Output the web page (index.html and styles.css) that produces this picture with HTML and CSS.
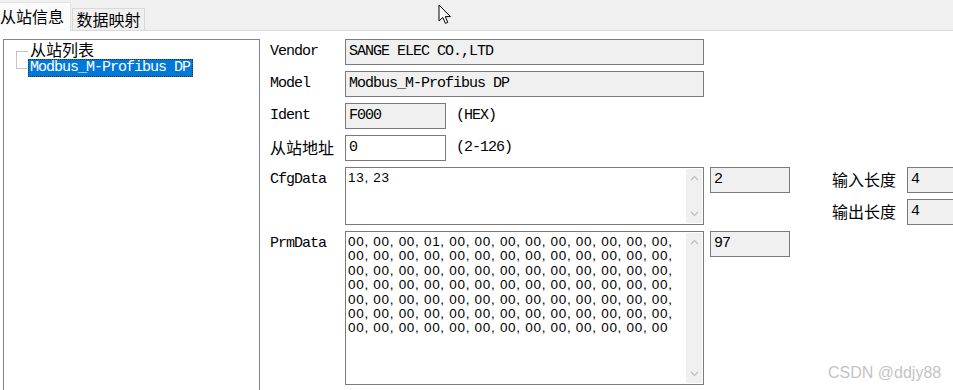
FILE: index.html
```html
<!DOCTYPE html>
<html>
<head>
<meta charset="utf-8">
<link rel="stylesheet" href="styles.css">
</head>
<body>
<div class="tabbar">
  <div class="tab active">从站信息</div>
  <div class="tab">数据映射</div>
</div>
<div class="main">
  <div class="tree">
    <svg class="conn" width="12" height="19" viewBox="0 0 12 19"><path d="M0.5 0.5H12M0.5 0.5V17.5H11" fill="none" stroke="#8a8a8a" stroke-dasharray="1 1"/></svg>
    <div class="items">
      <div class="node cjk">从站列表</div>
      <div class="node sel">Modbus_M-Profibus DP</div>
    </div>
  </div>
  <div class="form">
    <div class="row">
      <div class="label">Vendor</div>
      <div class="field wide ro">SANGE ELEC CO.,LTD</div>
    </div>
    <div class="row">
      <div class="label">Model</div>
      <div class="field wide ro">Modbus_M-Profibus DP</div>
    </div>
    <div class="row">
      <div class="label">Ident</div>
      <div class="field short ro">F000</div>
      <div class="hint">(HEX)</div>
    </div>
    <div class="row">
      <div class="label cjk">从站地址</div>
      <div class="field short">0</div>
      <div class="hint">(2-126)</div>
    </div>
    <div class="row tall">
      <div class="label">CfgData</div>
      <div class="area cfg">
        <div class="atext">13, 23</div>
        <div class="sbar">
          <svg class="chev" width="9" height="6" viewBox="0 0 9 6"><path d="M1 5L4.5 1.5L8 5" fill="none" stroke="#bcbcbc" stroke-width="1.2"/></svg>
          <svg class="chev" width="9" height="6" viewBox="0 0 9 6"><path d="M1 1L4.5 4.5L8 1" fill="none" stroke="#bcbcbc" stroke-width="1.2"/></svg>
        </div>
      </div>
      <div class="field count ro">2</div>
      <div class="lens">
        <div class="lenrow"><div class="label cjk">输入长度</div><div class="field len ro">4</div></div>
        <div class="lenrow"><div class="label cjk">输出长度</div><div class="field len ro">4</div></div>
      </div>
    </div>
    <div class="row big">
      <div class="label">PrmData</div>
      <div class="area prm">
        <div class="atext">00, 00, 00, 01, 00, 00, 00, 00, 00, 00, 00, 00, 00,<br>00, 00, 00, 00, 00, 00, 00, 00, 00, 00, 00, 00, 00,<br>00, 00, 00, 00, 00, 00, 00, 00, 00, 00, 00, 00, 00,<br>00, 00, 00, 00, 00, 00, 00, 00, 00, 00, 00, 00, 00,<br>00, 00, 00, 00, 00, 00, 00, 00, 00, 00, 00, 00, 00,<br>00, 00, 00, 00, 00, 00, 00, 00, 00, 00, 00, 00, 00,<br>00, 00, 00, 00, 00, 00, 00, 00, 00, 00, 00, 00, 00</div>
        <div class="sbar">
          <svg class="chev" width="9" height="6" viewBox="0 0 9 6"><path d="M1 5L4.5 1.5L8 5" fill="none" stroke="#bcbcbc" stroke-width="1.2"/></svg>
          <svg class="chev" width="9" height="6" viewBox="0 0 9 6"><path d="M1 1L4.5 4.5L8 1" fill="none" stroke="#bcbcbc" stroke-width="1.2"/></svg>
        </div>
      </div>
      <div class="field count ro">97</div>
    </div>
  </div>
</div>
<svg class="cursor" width="14" height="21" viewBox="0 0 14 21"><path d="M1 1V17L4.8 13.4L7.4 19.4L9.8 18.4L7.3 12.6H12.4Z" fill="#fff" stroke="#000" stroke-width="1" stroke-linejoin="miter"/></svg>
<div class="watermark">CSDN @ddjy88</div>
</body>
</html>
```
FILE: styles.css
```css
html, body {
  margin: 0;
  padding: 0;
  background: #ffffff;
  width: 953px;
  height: 390px;
  overflow: hidden;
  position: relative;
  font-family: "Liberation Mono", "Noto Sans CJK SC", monospace;
  font-size: 15px;
  letter-spacing: -1px;
  color: #000;
}
.cjk {
  font-family: "Noto Sans CJK SC", sans-serif;
  font-size: 16px;
  letter-spacing: 0;
}
.tabbar {
  height: 30px;
  background: #f0f0f0;
  border-bottom: 1px solid #d9d9d9;
  display: flex;
  align-items: flex-end;
}
.tab {
  font-family: "Noto Sans CJK SC", sans-serif;
  font-size: 16px;
  letter-spacing: 0;
  height: 21px;
  line-height: 21px;
  padding: 0 2px;
  width: 67px;
  background: #f0f0f0;
  border: 1px solid #d9d9d9;
  border-bottom: none;
  text-align: center;
}
.tab.active {
  width: 70px;
  padding: 0;
  text-align: left;
  background: #fbfbfb;
  border-color: #e3e3e3;
  border-left: none;
  margin-right: 1px;
  margin-bottom: -1px;
  height: 28px;
  line-height: 27px;
}
.main {
  display: flex;
  align-items: flex-start;
}
.tree {
  flex: none;
  margin: 8px 0 0 3px;
  width: 257px;
  height: 360px;
  border: 1px solid #838383;
  border-bottom: none;
  display: flex;
  align-items: flex-start;
  padding: 1px 0 0 12px;
  box-sizing: border-box;
}
.conn {
  margin-top: 10px;
  flex: none;
}
.items {
  display: flex;
  flex-direction: column;
  align-items: flex-start;
}
.node {
  height: 18px;
  line-height: 18px;
  padding-left: 2px;
}
.node.cjk {
  line-height: 17px;
}
.node.sel {
  background: #0078d7;
  color: #fff;
  padding: 0 2px 0 1px;
  box-sizing: border-box;
  border: 1px dotted #333;
  line-height: 16px;
}
.form {
  flex: none;
  margin: 8px 0 0 10px;
  display: flex;
  flex-direction: column;
  gap: 6px;
}
.row {
  display: flex;
  align-items: flex-start;
  height: 26px;
}
.row.tall { height: 58px; }
.row.big { height: 154px; }
.label {
  width: 75px;
  flex: none;
  height: 26px;
  line-height: 26px;
}
.label.cjk { line-height: 25px; }
.field {
  height: 26px;
  box-sizing: border-box;
  border: 1px solid #7a7a7a;
  background: #fff;
  line-height: 24px;
  padding-left: 3px;
  flex: none;
  white-space: nowrap;
}
.field.ro { background: #f0f0f0; }
.wide { width: 359px; }
.short { width: 101px; }
.count { width: 80px; margin-left: 6px; }
.len { width: 60px; }
.hint {
  margin-left: 10px;
  line-height: 26px;
}
.area {
  width: 359px;
  height: 100%;
  box-sizing: border-box;
  border: 1px solid #7a7a7a;
  background: #fff;
  display: flex;
  flex: none;
}
.atext {
  flex: 1;
  font-family: "Liberation Sans", Arial, sans-serif;
  font-size: 13.5px;
  letter-spacing: 0.7px;
  line-height: 14.4px;
  padding: 3px 0 0 2px;
  white-space: nowrap;
  overflow: hidden;
}
.sbar {
  width: 16px;
  margin: 1px 1px 1px 0;
  background: #f0f0f0;
  display: flex;
  flex-direction: column;
  justify-content: space-between;
  align-items: center;
  padding: 6px 0 6px;
  box-sizing: border-box;
}
.lens {
  margin-left: 42px;
  display: flex;
  flex-direction: column;
  gap: 6px;
}
.lenrow {
  display: flex;
  height: 26px;
}
.cursor {
  position: absolute;
  left: 438px;
  top: 4px;
}
.watermark {
  position: absolute;
  left: 828px;
  top: 364px;
  font-family: "Liberation Sans", Arial, sans-serif;
  font-size: 16px;
  letter-spacing: 0;
  color: #c4c4c4;
}
```
